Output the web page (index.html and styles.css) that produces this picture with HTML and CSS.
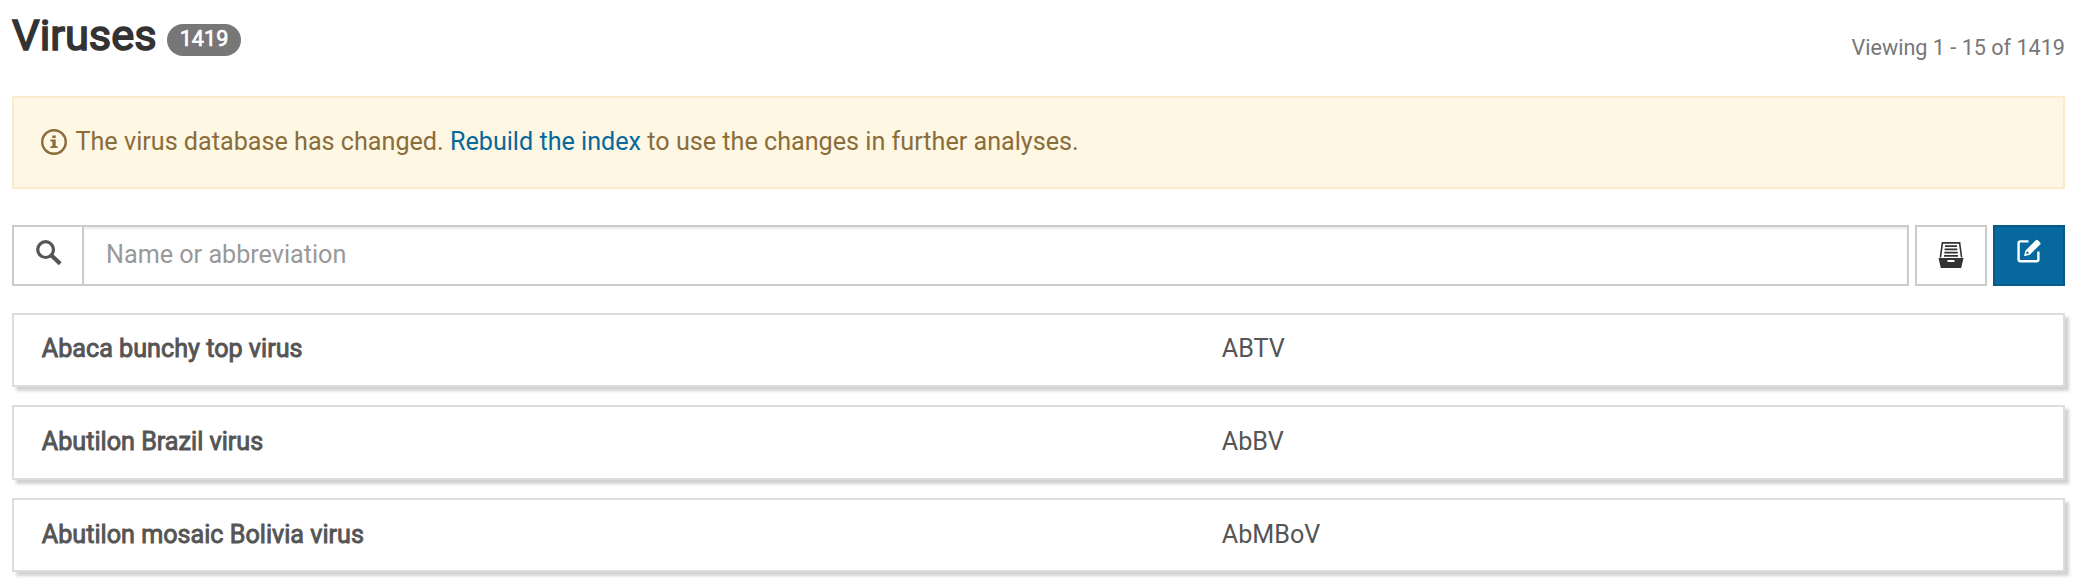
FILE: index.html
```html
<!DOCTYPE html>
<html lang="en">
<head>
<meta charset="utf-8">
<title>Viruses</title>
<link rel="stylesheet" href="styles.css">
</head>
<body>
<main class="page">
  <header class="header">
    <h1 class="title">Viruses</h1>
    <span class="badge">1419</span>
    <span class="viewing">Viewing 1 - 15 of 1419</span>
  </header>
  <div class="alert">
    <svg class="alert-icon" viewBox="0 0 26 26"><circle cx="13" cy="13" r="11.8" fill="none" stroke="currentColor" stroke-width="2.4"/><path fill="currentColor" d="M11.3 6.4h3.4v2.5h-3.4zM9.4 10.6h5.3v6.7h2v1.8H9.4v-1.8h2v-4.9h-2z"/></svg>
    <p class="alert-text">The virus database has changed. <a class="link" href="#">Rebuild the index</a> to use the changes in further analyses.</p>
  </div>
  <div class="toolbar">
    <div class="search">
      <span class="addon"><svg class="search-icon" viewBox="0 0 26 26"><circle cx="9.6" cy="9.6" r="7.9" fill="none" stroke="currentColor" stroke-width="3.2"/><path d="M15.3 15.3L24.2 23.8" fill="none" stroke="currentColor" stroke-width="4.2"/></svg></span>
      <input class="input" type="text" placeholder="Name or abbreviation">
    </div>
    <button class="btn" type="button" aria-label="Filter"><svg class="archive-icon" viewBox="0 0 26 26"><path fill="none" stroke="currentColor" stroke-width="1.6" d="M2.4 15.5L4.4.9h17.2l2 14.6"/><path fill="currentColor" d="M7 3.2h12v1.7H7zM6.6 6.5h12.8v1.7H6.6zM6.3 9.8h13.4v1.7H6.3zM6 13.1h14v1.7H6z"/><path fill="currentColor" fill-rule="evenodd" d="M.5 16h25l-2.3 10H2.8zM9.5 18v2h7v-2z"/></svg></button>
    <button class="btn btn-primary" type="button" aria-label="Create"><svg class="edit-icon" viewBox="0 0 24 24"><path fill="none" stroke="currentColor" stroke-width="2.4" d="M11.5 2.4H3.2a1.6 1.6 0 0 0-1.6 1.6v16.6a1.6 1.6 0 0 0 1.6 1.6h16.6a1.6 1.6 0 0 0 1.6-1.6v-8"/><path fill="currentColor" fill-rule="evenodd" d="M7 17.2L8.5 11.4 18.5 1.4a1.8 1.8 0 0 1 2.6 0l1.8 1.8a1.8 1.8 0 0 1 0 2.6L12.8 15.7zM10 11.9l-.9 3.2 3.2-.9z"/></svg></button>
  </div>
  <ul class="list">
    <li class="item"><strong class="name">Abaca bunchy top virus</strong><span class="abbr">ABTV</span></li>
    <li class="item"><strong class="name">Abutilon Brazil virus</strong><span class="abbr">AbBV</span></li>
    <li class="item"><strong class="name">Abutilon mosaic Bolivia virus</strong><span class="abbr">AbMBoV</span></li>
  </ul>
</main>
</body>
</html>
```
FILE: styles.css
```css
* { box-sizing: border-box; }
body {
  margin: 0;
  background: #fff;
  color: #333;
  font-family: Roboto, "Liberation Sans", sans-serif;
  font-size: 25.17px;
  line-height: 36px;
}
.page { min-height: 587px; padding: 0 16px 0 12px; }
.header { display: flex; height: 96px; }
.title {
  width: 155px;
  margin: 10px 0 0;
  font-size: 43.4px;
  line-height: 52px;
  font-weight: 400;
  -webkit-text-stroke: 1.6px currentColor;
}
.badge {
  margin-top: 24px;
  width: 74px;
  height: 32px;
  border-radius: 16px;
  background: #777;
  color: #fff;
  font-size: 21.6px;
  line-height: 29px;
  text-align: center;
  -webkit-text-stroke: .7px currentColor;
}
.viewing {
  margin: 30px 0 0 auto;
  font-size: 21.6px;
  color: #777;
}
.alert {
  display: flex;
  height: 93px;
  padding: 26px 27px;
  border: 2px solid #faebcc;
  background: #fdf7e3;
  color: #8a6d3b;
}
.alert-icon { width: 26px; height: 26px; margin: 5px 8.5px 0 0; }
.alert-text { margin: 0; }
.link { color: #07689d; text-decoration: none; }
.toolbar { display: flex; gap: 6px; height: 61px; margin-top: 36px; }
.search { display: flex; flex: 1; border: 2px solid #ccc; }
.addon { width: 70px; padding: 13px 0 0 21.5px; border-right: 2px solid #ccc; color: #555; }
.search-icon { display: block; width: 26px; height: 26px; }
.input {
  flex: 1;
  border: 0;
  padding: 0 22px 2px;
  font: inherit;
  color: #555;
  box-shadow: inset 0 2px 2px rgba(0, 0, 0, .075);
  outline: 0;
}
.input::placeholder { color: #999; }
.btn {
  display: flex;
  align-items: flex-start;
  width: 72px;
  padding: 0;
  border: 2px solid #ccc;
  background: #fff;
  color: #333;
}
.btn-primary { border-color: #065a88; background: #07689d; color: #fff; }
.archive-icon { width: 26px; height: 26px; margin: 15px 0 0 21px; }
.edit-icon { width: 24px; height: 24px; margin: 12px 0 0 22px; }
.list { display: grid; gap: 18.3px; margin: 26.8px 0 0; padding: 0; list-style: none; }
.item {
  display: grid;
  grid-template-columns: 1180px 1fr;
  height: 74.3px;
  padding: 16.6px 27.8px;
  border: 2px solid #ddd;
  box-shadow: 4px 4px 3px rgba(0, 0, 0, .18);
  color: #555;
}
.name { font-weight: 400; -webkit-text-stroke: .9px currentColor; }
```
